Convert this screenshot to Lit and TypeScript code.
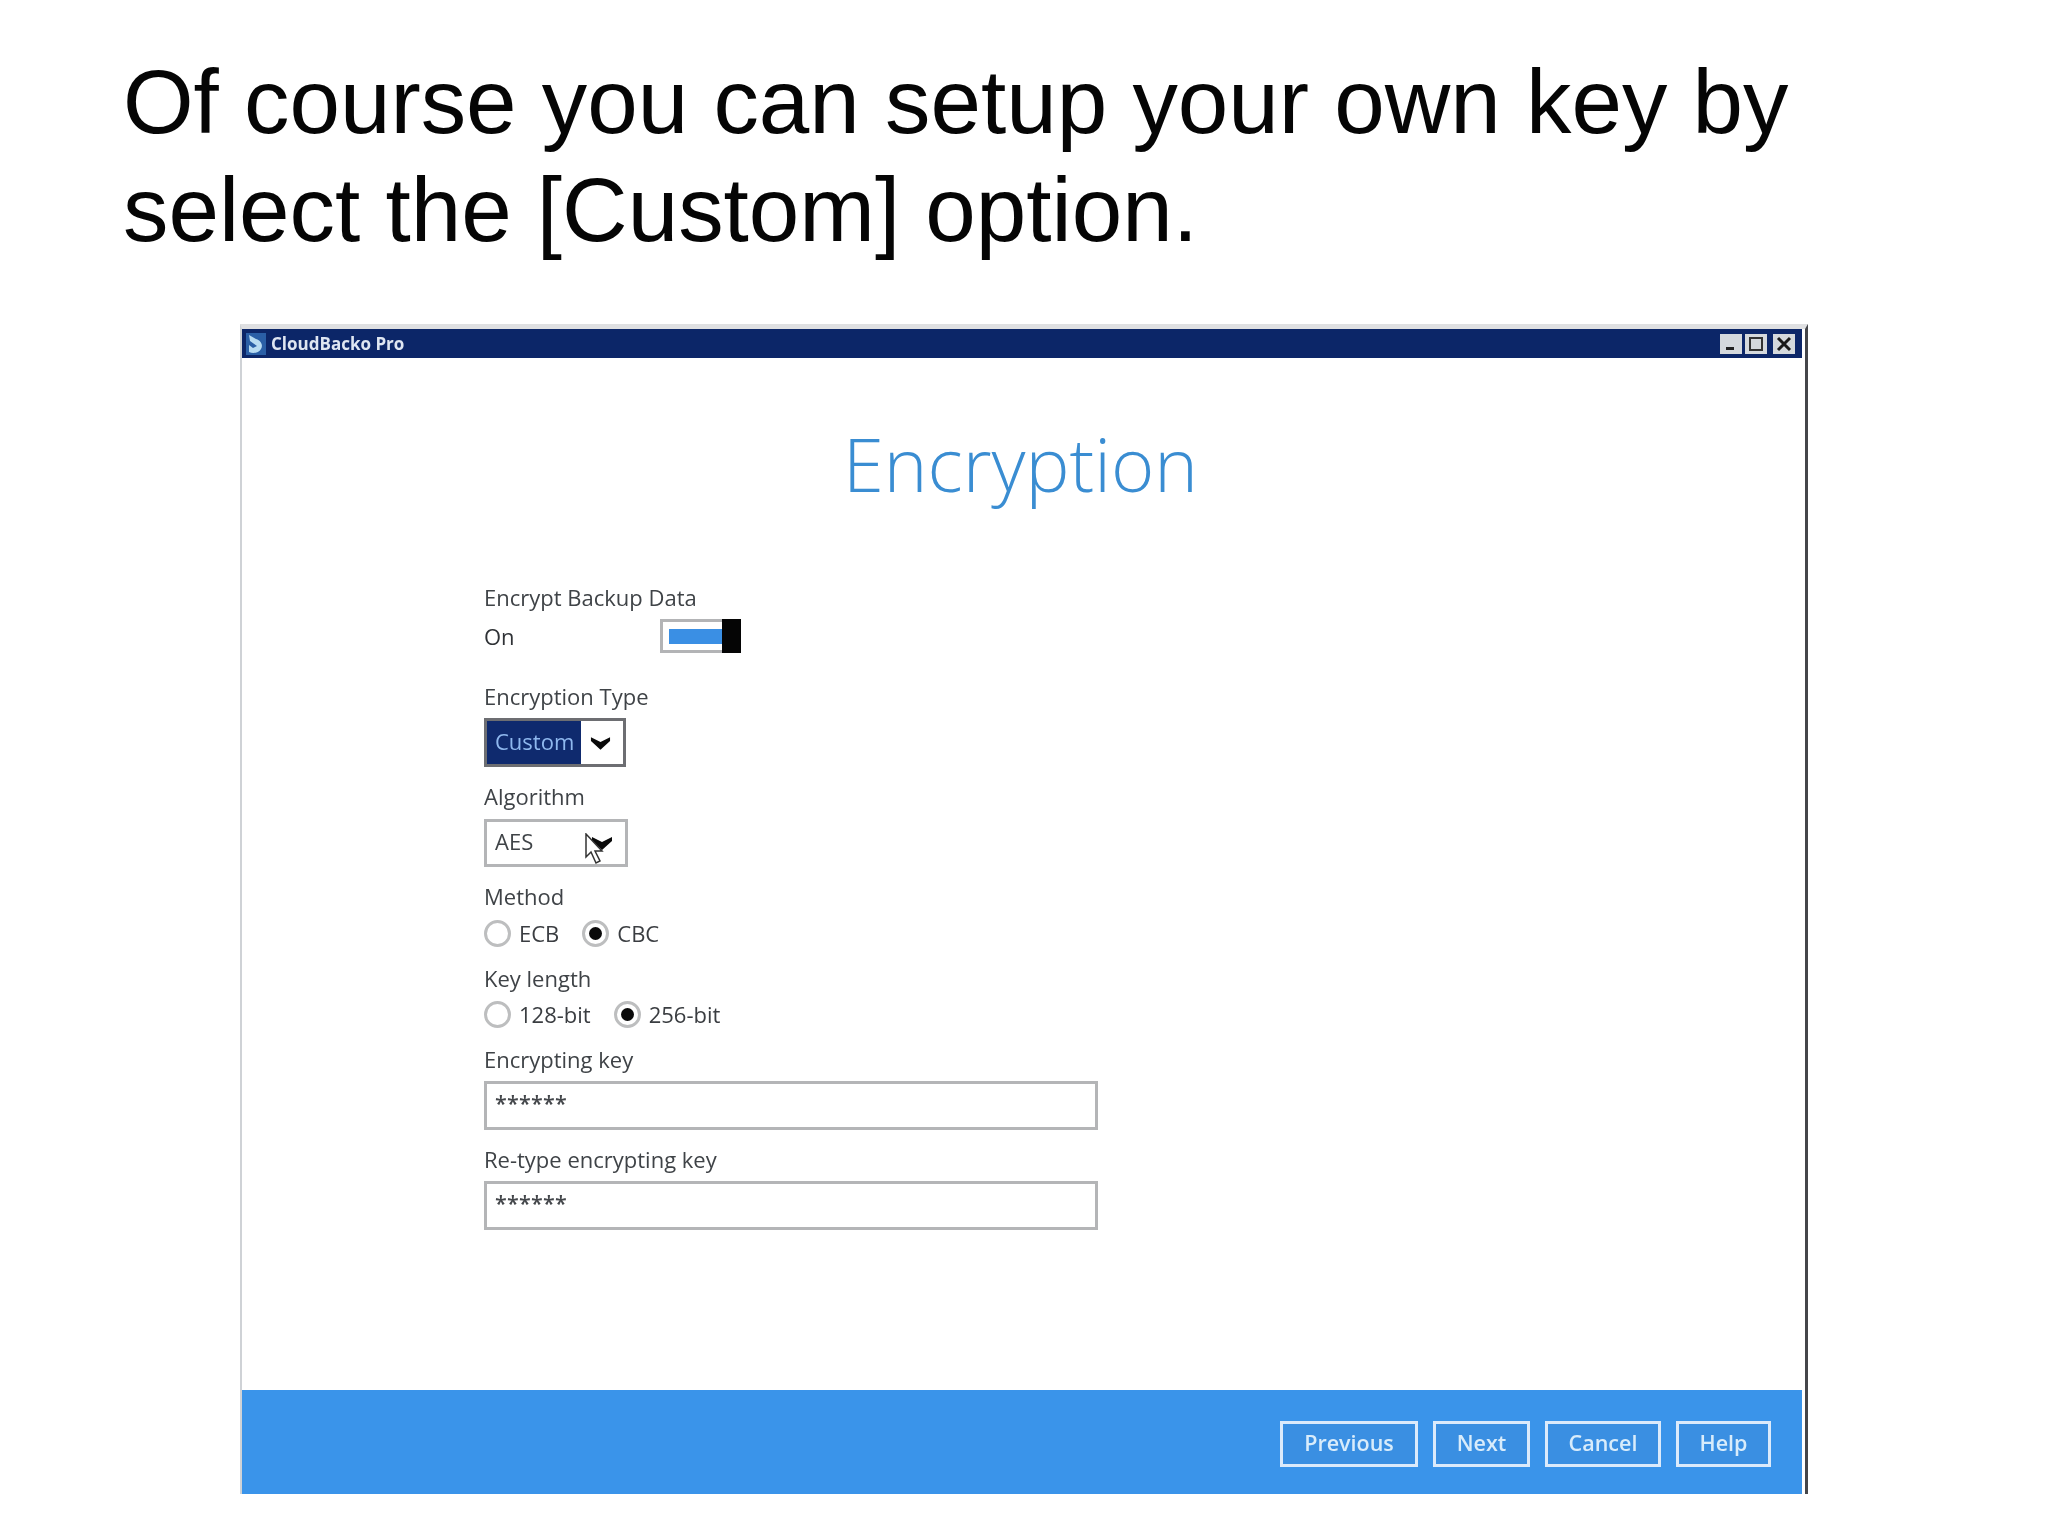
import { LitElement, html, css, svg } from "lit";
import { customElement } from "lit/decorators.js";

const chevron = svg`<svg class="chev" width="22" height="16" viewBox="0 0 22 16"><path d="M1 2 L11 7 L21 2 L21 6 L11 15 L1 6 Z" fill="#0a0a0a"/></svg>`;

@customElement("app-root")
export class AppRoot extends LitElement {
  static styles = css`
    :host { display: block; width: 2048px; height: 1536px; background: #fff; overflow: hidden; }
    h1 { margin: 0; padding: 48px 0 0 123px; height: 324px; box-sizing: border-box; font: 400 90.8px/108px "Liberation Sans", Arial, sans-serif; color: #050505; }
    .window { position: relative; margin-left: 240px; width: 1568px; height: 1170px; box-sizing: border-box; display: flex; flex-direction: column;
      border-top: 5px solid #dfe0e2; border-left: 2px solid #cfd2d6; border-right: 3px solid #45464a; padding-right: 3px; background: #fff;
      font-family: "Open Sans", sans-serif; filter: blur(0.7px); }
    .titlebar { height: 29px; flex: none; background: #0c2668; display: flex; align-items: center; padding: 0 7px 0 4px; gap: 5px; color: #dfe6f2; font: 700 17px "Open Sans", sans-serif; }
    .titlebar .name { flex: 1; }
    .ctl { width: 22px; height: 20px; background: #d5d9dd; display: flex; align-items: center; justify-content: center; }
    .controls { display: flex; gap: 3px; }
    .controls .ctl:last-child { margin-left: 3px; }
    .body { flex: 1; display: flex; flex-direction: column; }
    .heading { height: 224px; box-sizing: border-box; padding-top: 56px; text-align: center; font: 300 74px/100px "Open Sans", sans-serif; color: #3a8dd2; padding-right: 3px; }
    form { margin: 0 0 0 242px; display: flex; flex-direction: column; align-items: flex-start; color: #3f4347; font-size: 22px; }
    label, .lab { display: block; height: 30px; line-height: 30px; }
    .onrow { display: flex; align-items: center; width: 257px; justify-content: space-between; margin-top: 7px; height: 34px; color: #2f3236; }
    .toggle { width: 81px; height: 34px; box-sizing: border-box; border: 3px solid #b3b4b6; display: flex; align-items: center; justify-content: flex-end; background: #fff; position: relative; }
    .toggle .fill { width: 53px; height: 15px; background: #3a8fe4; }
    .toggle .thumb { width: 19px; height: 34px; background: #050505; margin: -3px -3px -3px 0; }
    .gap28 { margin-top: 28px; }
    .gap14 { margin-top: 14px; }
    .gap17 { margin-top: 17px; }
    .select { margin-top: 8px; width: 144px; height: 48px; box-sizing: border-box; border: 3px solid #b4b5b7; display: flex; align-items: center; position: relative; background: #fff; }
    .select .val { padding-left: 8px; flex: 1; line-height: 38px; height: 42px; }
    .select .chev { margin-right: 12px; }
    .select.active { margin-top: 7px; height: 49px; width: 142px; border-color: #6d6e72; }
    .select.active .val { flex: none; width: 94px; box-sizing: border-box; align-self: stretch; height: auto; line-height: 41px; background: #0f2a6e; color: #8fb8ee; margin-right: 9px; }
    .cursor { position: absolute; left: 97px; top: 11px; }
    .radios { margin-top: 9px; display: flex; align-items: center; height: 26px; color: #3a3d41; }
    .radios.tight { margin-top: 8px; }
    .radio { width: 27px; height: 27px; box-sizing: border-box; border: 3px solid #bdbebf; border-radius: 50%; flex: none; display: flex; align-items: center; justify-content: center; background: #fff; margin-right: 8px; }
    .radio.on::after { content: ""; width: 13px; height: 13px; border-radius: 50%; background: #0a0a0a; }
    .rtext { margin-right: 23px; }
    .input { margin-top: 7px; width: 614px; height: 49px; box-sizing: border-box; border: 3px solid #b4b5b7; padding: 0 8px; line-height: 38px; color: #44474b; font-size: 21.5px; font-weight: 600; letter-spacing: 0.2px; background: #fff; }
    .footer { margin-top: auto; height: 104px; flex: none; background: #3a94ea; display: flex; align-items: flex-start; justify-content: flex-end; gap: 15px; padding: 31px 31px 0 0; box-sizing: border-box; }
    button { height: 46px; box-sizing: border-box; border: 3px solid #dbeafb; background: #3a8fe2; color: #d8ecfb; font: 600 21.5px/36px "Open Sans", sans-serif; padding: 0 0 2px; }
    .b1 { width: 138px; } .b2 { width: 97px; } .b3 { width: 116px; } .b4 { width: 95px; }
  `;
  render() {
    return html`
      <h1>Of course you can setup your own key by<br />select the [Custom] option.</h1>
      <div class="window">
        <div class="titlebar">
          <svg width="20" height="22" viewBox="0 0 20 22">
            <rect width="20" height="22" fill="#2a5fa6"/>
            <path d="M3 2 L10 6 C16 8 17 13 15 16 C13 20 7 21 3 19 L3 12 L7 15 L11 13 L4 8 Z" fill="#b8dcf2"/>
          </svg>
          <span class="name">CloudBacko Pro</span>
          <div class="controls">
            <div class="ctl"><svg width="14" height="14" viewBox="0 0 14 14"><rect x="2" y="10" width="8" height="3" fill="#222"/></svg></div>
            <div class="ctl"><svg width="16" height="16" viewBox="0 0 16 16"><rect x="2" y="2" width="12" height="12" fill="none" stroke="#333" stroke-width="2"/></svg></div>
            <div class="ctl"><svg width="16" height="16" viewBox="0 0 16 16"><path d="M2 2 L14 14 M14 2 L2 14" stroke="#1a1a1a" stroke-width="3"/></svg></div>
          </div>
        </div>
        <div class="body">
          <div class="heading">Encryption</div>
          <form>
            <label>Encrypt Backup Data</label>
            <div class="onrow"><span>On</span><div class="toggle"><div class="fill"></div><div class="thumb"></div></div></div>
            <label class="gap28">Encryption Type</label>
            <div class="select active"><span class="val">Custom</span>${chevron}</div>
            <label class="gap14">Algorithm</label>
            <div class="select"><span class="val">AES</span>${chevron}
              <svg class="cursor" width="20" height="32" viewBox="0 0 20 32"><path d="M2 1 L2 24 L7 19 L12 30 L16 28 L11 18 L18 18 Z" fill="#fff" stroke="#333" stroke-width="1.5"/></svg>
            </div>
            <div class="lab gap14">Method</div>
            <div class="radios"><span class="radio"></span><span class="rtext">ECB</span><span class="radio on"></span><span>CBC</span></div>
            <div class="lab gap17">Key length</div>
            <div class="radios tight"><span class="radio"></span><span class="rtext">128-bit</span><span class="radio on"></span><span>256-bit</span></div>
            <label class="gap17">Encrypting key</label>
            <div class="input">******</div>
            <label class="gap14">Re-type encrypting key</label>
            <div class="input">******</div>
          </form>
          <div class="footer">
            <button type="button" class="b1">Previous</button>
            <button type="button" class="b2">Next</button>
            <button type="button" class="b3">Cancel</button>
            <button type="button" class="b4">Help</button>
          </div>
        </div>
      </div>
    `;
  }
}
